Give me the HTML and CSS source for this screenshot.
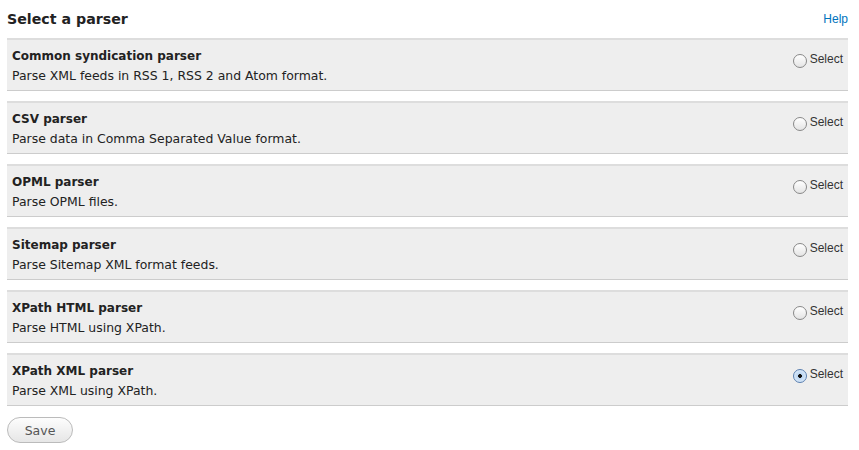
FILE: index.html
```html
<!DOCTYPE html>
<html>
<head>
<meta charset="utf-8">
<link rel="stylesheet" href="styles.css">
</head>
<body>
<div class="page">
  <div class="header">
    <h2 class="title">Select a parser</h2>
    <a class="help" href="#">Help</a>
  </div>
  <div class="list">
    <div class="item">
      <div class="info"><div class="name">Common syndication parser</div><div class="desc">Parse XML feeds in RSS 1, RSS 2 and Atom format.</div></div>
      <label class="opt"><span class="radio"></span>Select</label>
    </div>
    <div class="item">
      <div class="info"><div class="name">CSV parser</div><div class="desc">Parse data in Comma Separated Value format.</div></div>
      <label class="opt"><span class="radio"></span>Select</label>
    </div>
    <div class="item">
      <div class="info"><div class="name">OPML parser</div><div class="desc">Parse OPML files.</div></div>
      <label class="opt"><span class="radio"></span>Select</label>
    </div>
    <div class="item">
      <div class="info"><div class="name">Sitemap parser</div><div class="desc">Parse Sitemap XML format feeds.</div></div>
      <label class="opt"><span class="radio"></span>Select</label>
    </div>
    <div class="item">
      <div class="info"><div class="name">XPath HTML parser</div><div class="desc">Parse HTML using XPath.</div></div>
      <label class="opt"><span class="radio"></span>Select</label>
    </div>
    <div class="item">
      <div class="info"><div class="name">XPath XML parser</div><div class="desc">Parse XML using XPath.</div></div>
      <label class="opt"><span class="radio checked"></span>Select</label>
    </div>
  </div>
  <button class="save">Save</button>
</div>
</body>
</html>
```
FILE: styles.css
```css
html, body { margin: 0; padding: 0; background: #fff; }
.page { padding: 0 11px 0 7px; font-family: "DejaVu Sans", sans-serif; color: #222; }
.header { display: flex; justify-content: space-between; align-items: flex-end; height: 38px; }
.title { margin: 0 0 9px 0; font-size: 14.2px; font-weight: bold; color: #222; line-height: 20px; }
.help { font-family: "Liberation Sans", Arial, sans-serif; font-size: 12px; color: #0074bd; text-decoration: none; margin-bottom: 12px; }
.list { display: flex; flex-direction: column; gap: 10px; }
.item { display: flex; justify-content: space-between; background: #eee; border-top: 2px solid #ddd; border-bottom: 1px solid #ccc; height: 50px; box-sizing: content-box; padding: 0 5px 0 5px; }
.info { padding-top: 6px; font-size: 12px; line-height: 20px; }
.name { font-weight: bold; }
.desc { color: #222; font-size: 12.45px; }
.opt { display: flex; align-items: center; font-family: "Liberation Sans", Arial, sans-serif; font-size: 12px; color: #333; height: 14px; margin-top: 12px; gap: 3px; }
.radio { width: 12px; height: 12px; border: 1px solid #888; border-radius: 50%; background: linear-gradient(#fff, #e4e4e4); box-sizing: content-box; position: relative; margin-top: 3px; }
.radio.checked { border-color: #5a7fb0; background: radial-gradient(circle, #111 0, #111 1.6px, #bcd6f2 2.2px, #e8f2fc 100%); }
.save { margin-top: 11px; font-family: "DejaVu Sans", sans-serif; font-size: 12.5px; color: #555; width: 66px; height: 26px; border: 1px solid #bbb; border-radius: 13px; background: linear-gradient(#fdfdfd, #e6e6e6); padding: 0; }
```
